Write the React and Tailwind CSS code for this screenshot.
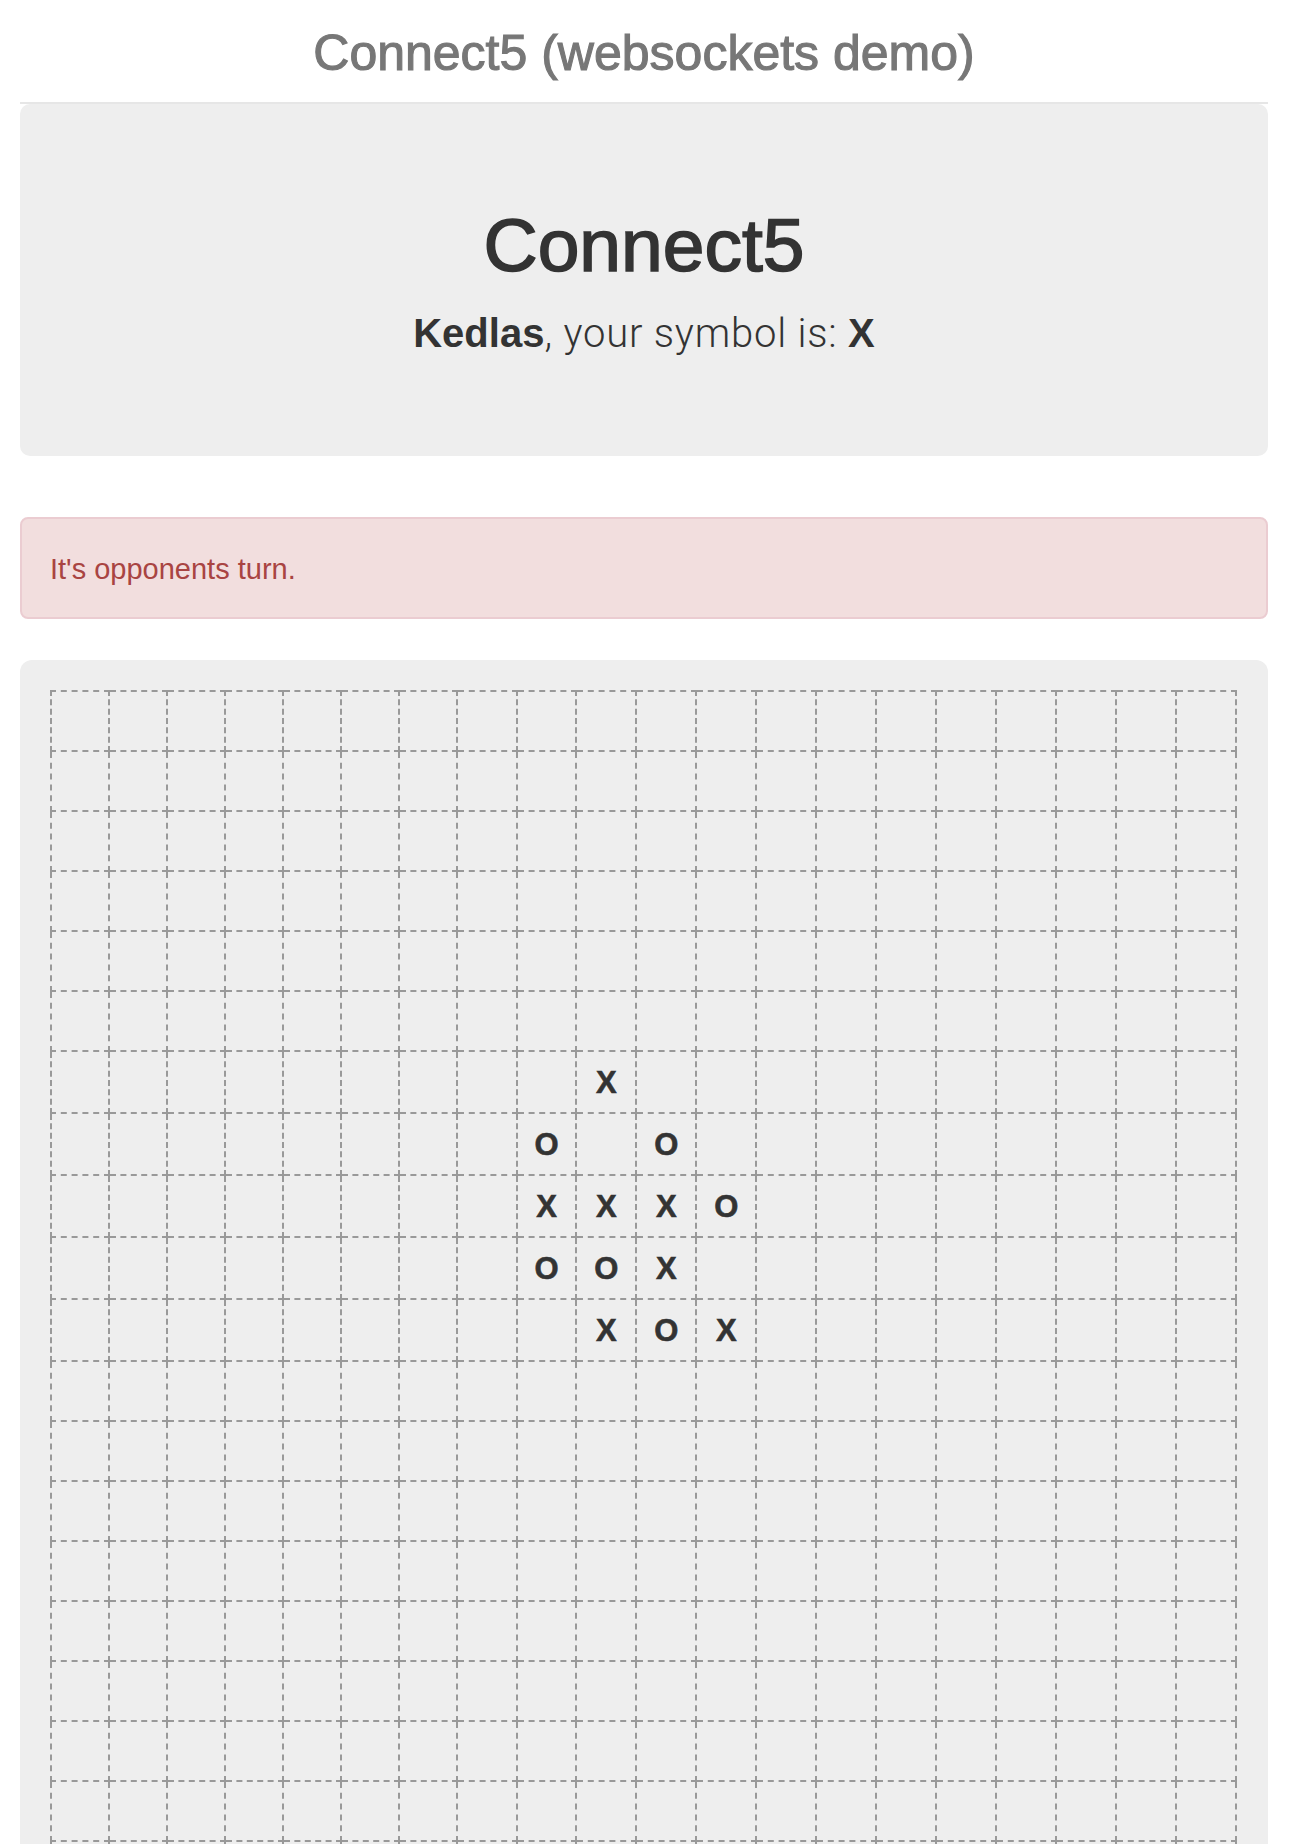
import React from 'react'

// board state, only the cells that are taken
const MOVES = {
  '6-9': 'X',
  '7-8': 'O', '7-10': 'O',
  '8-8': 'X', '8-9': 'X', '8-10': 'X', '8-11': 'O',
  '9-8': 'O', '9-9': 'O', '9-10': 'X',
  '10-9': 'X', '10-10': 'O', '10-11': 'X',
}

const SIZE = 20
const rows = Array.from({ length: SIZE }, (_, r) => r)
const cols = Array.from({ length: SIZE }, (_, c) => c)

function Board() {
  return (
    <table className="table-fixed border-collapse">
      <colgroup>
        {cols.map((c) => (
          <col key={c} className={c < 7 ? 'w-[58px]' : 'w-[60px]'} />
        ))}
      </colgroup>
      <tbody>
        {rows.map((r) => {
          const taken = cols.some((c) => MOVES[`${r}-${c}`])
          return (
            <tr key={r} className={taken ? 'h-[62px]' : 'h-[60px]'}>
              {cols.map((c) => (
                <td
                  key={c}
                  className="border-2 border-dashed border-[#999] p-0 text-center align-middle text-[31px] font-bold text-[#333] leading-none [-webkit-text-stroke:0.6px_#333]"
                >
                  {MOVES[`${r}-${c}`] || ''}
                </td>
              ))}
            </tr>
          )
        })}
      </tbody>
    </table>
  )
}

export default function App() {
  return (
    <div className="min-h-screen bg-white pl-[20px] pr-[28px] font-['Liberation_Sans',Arial,sans-serif]">

      {/* ── Page header ───────────────────────── */}
      <div className="pt-[26px] pb-[21px] border-b-2 border-[#e6e6e6] text-center">
        <h3 className="text-[50px] leading-[55px] text-[#777] [-webkit-text-stroke:1.1px_#777]">
          Connect5 (websockets demo)
        </h3>
      </div>

      {/* ── Jumbotron ─────────────────────────── */}
      <div className="bg-[#eee] rounded-[10px] pt-[100px] pb-[100px] text-center text-[#333]">
        <h1 className="text-[75px] leading-[82px] [-webkit-text-stroke:1.6px_#333]">Connect5</h1>
        <p className="mt-[25px] text-[40px] leading-[44px]">
          <b className="font-bold">Kedlas</b>
          <span className="font-['Roboto',sans-serif] font-light tracking-[0.8px]">, your symbol is: </span>
          <b className="font-bold">X</b>
        </p>
      </div>

      {/* ── Status alert ──────────────────────── */}
      <div className="mt-[61px] bg-[#f2dede] border-2 border-[#ebccd1] rounded-[8px] px-[28px] pt-[30px] pb-[27px] text-[29px] leading-[41px] text-[#a94442]">
        It's opponents turn.
      </div>

      {/* ── Game board ────────────────────────── */}
      <div className="mt-[41px] bg-[#eee] rounded-[12px] pt-[30px] pl-[30px] pr-[31px] pb-[40px]">
        <Board />
      </div>
    </div>
  )
}
